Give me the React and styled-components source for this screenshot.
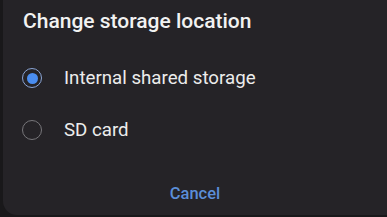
import React, { useState } from 'react';
import styled, { createGlobalStyle } from 'styled-components';

const Global = createGlobalStyle`
  html, body {
    margin: 0;
    padding: 0;
    background: #19181a;
    width: 387px;
    height: 217px;
    overflow: hidden;
    font-family: Roboto, "Noto Sans", sans-serif;
  }
`;

const Dialog = styled.div`
  margin-left: 3px;
  width: 400px;
  height: 215px;
  background: #252327;
  border-radius: 0 0 14px 14px;
  box-sizing: border-box;
  display: flex;
  flex-direction: column;
`;

const Title = styled.h2`
  margin: 0;
  padding: 9px 0 0 20px;
  font-size: 21px;
  font-weight: 500;
  color: #f2f2f2;
`;

const Options = styled.div`
  display: flex;
  flex-direction: column;
  margin-top: 19px;
`;

const Option = styled.label`
  display: flex;
  align-items: center;
  height: 52px;
  padding-left: 19px;
  cursor: pointer;
`;

const Radio = styled.span`
  width: 18px;
  height: 18px;
  border-radius: 50%;
  border: 1.3px solid ${(p) => (p.$checked ? '#8aa5d6' : '#77767a')};
  display: flex;
  align-items: center;
  justify-content: center;
  flex-shrink: 0;

  &::after {
    content: '';
    width: 11px;
    height: 11px;
    border-radius: 50%;
    background: ${(p) => (p.$checked ? '#4a8df0' : 'transparent')};
  }
`;

const OptionText = styled.span`
  margin-left: 22px;
  font-size: 18.7px;
  color: #ececec;
`;

const Actions = styled.div`
  margin-top: auto;
  display: flex;
  justify-content: center;
  padding: 0 16px 8px 0;
`;

const TextButton = styled.button`
  background: none;
  border: none;
  padding: 4px 8px;
  font-family: inherit;
  font-size: 16.5px;
  font-weight: 500;
  color: #5b8ed8;
`;

const options = ['Internal shared storage', 'SD card'];

export default function App() {
  const [selected, setSelected] = useState(0);
  return (
    <>
      <Global />
      <Dialog>
        <Title>Change storage location</Title>
        <Options>
          {options.map((label, i) => (
            <Option key={label} onClick={() => setSelected(i)}>
              <Radio $checked={selected === i} />
              <OptionText>{label}</OptionText>
            </Option>
          ))}
        </Options>
        <Actions>
          <TextButton>Cancel</TextButton>
        </Actions>
      </Dialog>
    </>
  );
}
